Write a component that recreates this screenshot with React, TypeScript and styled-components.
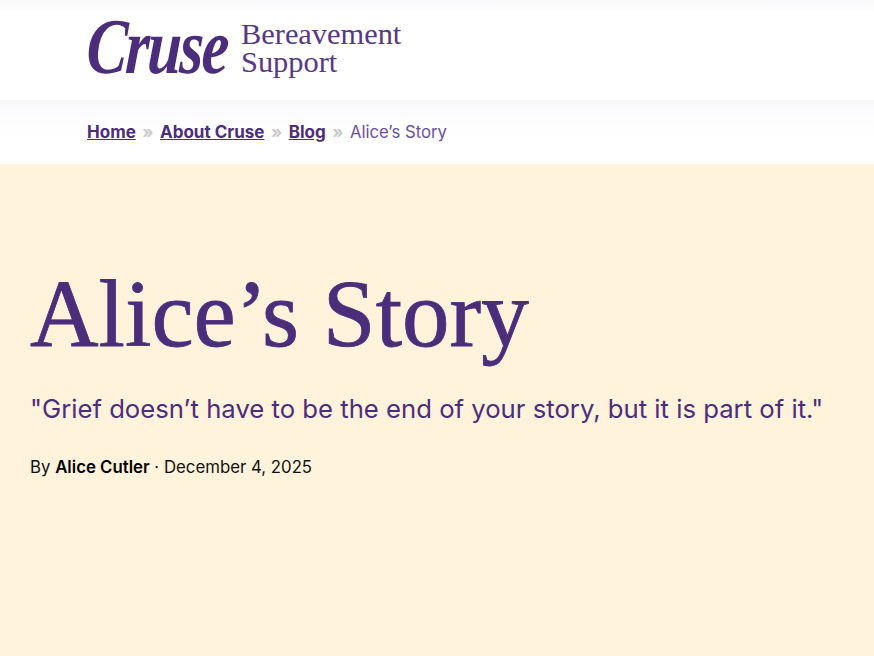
import React from 'react';
import styled, {createGlobalStyle} from "styled-components";

const GlobalStyle = createGlobalStyle`
  html, body {
    margin: 0;
    padding: 0;
    height: 100%;
    background: #fff;
  }
  body {
    font-family: "Inter", "Liberation Sans", sans-serif;
  }
`

const App = () => {
    return (
        <Page>
            <GlobalStyle/>
            <Header>
                <Logo href="#" aria-label="Cruse Bereavement Support">
                    <LogoScript>Cruse</LogoScript>
                    <LogoTag>Bereavement<br/>Support</LogoTag>
                </Logo>
            </Header>
            <Breadcrumbs>
                <Crumb href="#">Home</Crumb>
                <Separator>»</Separator>
                <Crumb href="#">About Cruse</Crumb>
                <Separator>»</Separator>
                <Crumb href="#">Blog</Crumb>
                <Separator>»</Separator>
                <Current>Alice’s Story</Current>
            </Breadcrumbs>
            <Hero>
                <Title>Alice’s Story</Title>
                <Quote>"Grief doesn’t have to be the end of your story, but it is part of it."</Quote>
                <Meta>By <Author>Alice Cutler</Author> · December 4, 2025</Meta>
            </Hero>
        </Page>
    );
};

export default App;

const Page = styled.div`
  display: flex;
  flex-direction: column;
  height: 656px;
  overflow: hidden;
`
const Header = styled.header`
  height: 100px;
  box-sizing: border-box;
  padding: 0 0 4px 87px;
  display: flex;
  align-items: center;
  background: linear-gradient(#f8f8fa 0, #fdfdfe 10px, #fff 12px);
`
const Logo = styled.a`
  display: flex;
  align-items: center;
  gap: 13px;
  color: #4c2d7c;
  text-decoration: none;
`
const LogoScript = styled.span`
  width: 141px;
  font-family: "Liberation Serif", serif;
  font-style: italic;
  font-weight: 700;
  font-size: 68px;
  line-height: 60px;
  letter-spacing: -2px;
  white-space: nowrap;
  transform: translateY(-2px) scale(0.9, 1.16) skewX(-4deg);
  transform-origin: left center;
`
const LogoTag = styled.span`
  font-family: "Liberation Serif", serif;
  font-size: 30.4px;
  line-height: 28px;
  color: #553887;
`
const Breadcrumbs = styled.nav`
  height: 64px;
  box-sizing: border-box;
  padding-left: 87px;
  display: flex;
  align-items: center;
  font-size: 17px;
  background: linear-gradient(#f8f8fb 0, #fdfdfe 22px, #fff 40px);
`
const Crumb = styled.a`
  color: #4c2d7c;
  font-weight: 700;
  text-decoration: underline;
`
const Separator = styled.span`
  color: #c9c9c9;
  font-weight: 700;
  margin: 0 6.5px;
`
const Current = styled.span`
  font-size: 16.7px;
  color: #6a4fa8;
`
const Hero = styled.section`
  flex: 1;
  background: #fff3dc;
  padding: 90px 30px 0;
`
const Title = styled.h1`
  margin: 0;
  font-family: "Liberation Serif", serif;
  font-weight: 400;
  font-size: 95px;
  line-height: 120px;
  color: #4c2d7c;
  -webkit-text-stroke: 0.8px #4c2d7c;
`
const Quote = styled.p`
  margin: 17px 0 0;
  font-size: 25.7px;
  line-height: 36px;
  white-space: nowrap;
  color: #4c2d7c;
`
const Meta = styled.p`
  margin: 28px 0 0;
  font-size: 16.8px;
  line-height: 24px;
  color: #111;
`
const Author = styled.strong`
  font-weight: 600;
  color: #000;
`
